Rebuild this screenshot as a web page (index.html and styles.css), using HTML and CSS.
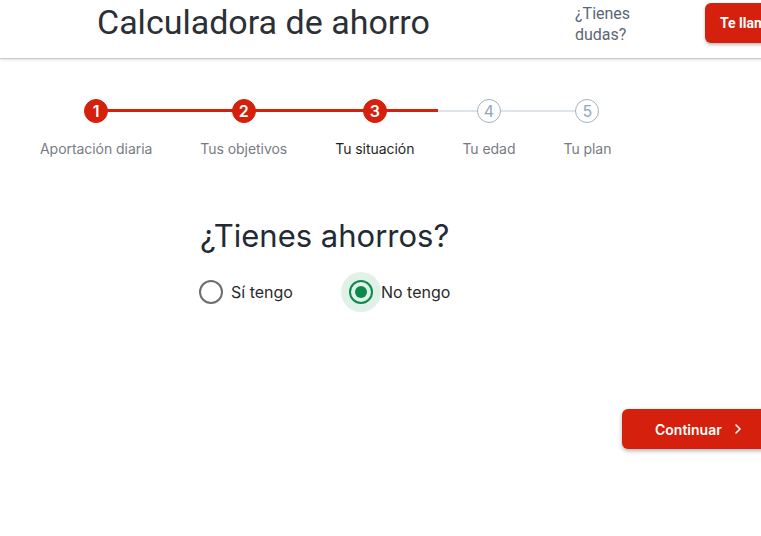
FILE: index.html
```html
<!DOCTYPE html>
<html lang="es">
<head>
<meta charset="utf-8">
<title>Calculadora de ahorro</title>
<link rel="stylesheet" href="styles.css">
</head>
<body>
<header class="header">
  <h1 class="title">Calculadora de ahorro</h1>
  <div class="doubts">¿Tienes<br>dudas?</div>
  <button class="call-btn">Te llamamos</button>
</header>

<ol class="stepper">
  <li class="step done">
    <span class="line left"></span><span class="line right"></span>
    <span class="dot">1</span>
    <span class="label">Aportación diaria</span>
  </li>
  <li class="step done">
    <span class="line left"></span><span class="line right"></span>
    <span class="dot">2</span>
    <span class="label">Tus objetivos</span>
  </li>
  <li class="step done current">
    <span class="line left"></span><span class="line right"></span>
    <span class="dot">3</span>
    <span class="label">Tu situación</span>
  </li>
  <li class="step">
    <span class="line left"></span><span class="line right"></span>
    <span class="dot">4</span>
    <span class="label">Tu edad</span>
  </li>
  <li class="step">
    <span class="line left"></span><span class="line right"></span>
    <span class="dot">5</span>
    <span class="label">Tu plan</span>
  </li>
</ol>

<section class="question">
  <h2 class="q-title">¿Tienes ahorros?</h2>
  <div class="options">
    <label class="option first">
      <span class="halo"><span class="radio"></span></span>
      <span class="opt-text">Sí tengo</span>
    </label>
    <label class="option selected">
      <span class="halo"><span class="radio"></span></span>
      <span class="opt-text">No tengo</span>
    </label>
  </div>
</section>

<div class="actions">
  <button class="next-btn">Continuar
    <svg class="chev" width="8" height="12" viewBox="0 0 8 12"><path d="M2 2l4 4-4 4" fill="none" stroke="#fff" stroke-width="1.6" stroke-linecap="round" stroke-linejoin="round"/></svg>
  </button>
</div>
</body>
</html>
```

FILE: styles.css
```css
html, body {
  margin: 0;
  padding: 0;
  overflow: hidden;
  background: #fff;
}
body {
  width: 761px;
  height: 536px;
  font-family: Inter, "Noto Sans", sans-serif;
  color: #222;
}
.header {
  width: 830px;
  height: 59px;
  box-sizing: border-box;
  display: flex;
  align-items: flex-start;
  padding: 0 0 0 97px;
  border-bottom: 1px solid #c9c9c9;
  box-shadow: 0 1px 2px rgba(0,0,0,0.12);
}
.title {
  flex: 1;
  margin: 2px 0 0;
  font-family: Roboto, "Liberation Sans", sans-serif;
  font-weight: 400;
  font-size: 34px;
  line-height: 40px;
  color: #2b2f36;
}
.doubts {
  width: 130px;
  margin-top: 3px;
  font-family: Roboto, "Liberation Sans", sans-serif;
  font-size: 16px;
  line-height: 21px;
  color: #5b6676;
}
.call-btn {
  width: 125px;
  height: 40px;
  margin-top: 3px;
  border: none;
  border-radius: 6px;
  background: #d4200c;
  color: #fff;
  font-family: Roboto, "Liberation Sans", sans-serif;
  font-weight: 700;
  font-size: 14px;
  text-align: left;
  padding: 0 0 0 15px;
  box-shadow: 0 2px 3px rgba(0,0,0,0.25);
}
.stepper {
  list-style: none;
  margin: 40px 0 0;
  padding: 0 0 0 16px;
  display: flex;
}
.step {
  position: relative;
  display: flex;
  flex-direction: column;
  align-items: center;
  padding: 0 24px;
}
.line {
  position: absolute;
  top: 11px;
  height: 2px;
  width: 50%;
  background: #dfe4e9;
}
.line.left { left: 0; }
.line.right { right: 0; }
.step:first-child .line.left,
.step:last-child .line.right { display: none; }
.step.done .line { background: #d4200c; height: 3px; top: 10px; }
.dot {
  position: relative;
  width: 24px;
  height: 24px;
  box-sizing: border-box;
  border-radius: 50%;
  border: 1px solid #9fb1c3;
  background: #fff;
  color: #93a6b9;
  font-size: 16px;
  line-height: 22px;
  text-align: center;
}
.step.done .dot {
  background: #d4200c;
  border-color: #d4200c;
  color: #fff;
  font-weight: 600;
}
.label {
  margin-top: 16px;
  font-size: 14px;
  letter-spacing: -0.05px;
  line-height: 20px;
  color: #777c84;
  white-space: nowrap;
}
.step.current .label { color: #1f1f1f; }
.question {
  margin: 57px 0 0 200px;
}
.q-title {
  margin: 0;
  font-weight: 400;
  font-size: 31px;
  line-height: 40px;
  color: #222a33;
}
.options {
  display: flex;
  gap: 48px;
  margin-top: 16px;
}
.option {
  display: flex;
  align-items: center;
  font-size: 16px;
  color: #2a2a2a;
}
.option.first { margin-left: -9px; }
.halo {
  width: 40px;
  height: 40px;
  border-radius: 50%;
  display: flex;
  align-items: center;
  justify-content: center;
}
.radio {
  width: 24px;
  height: 24px;
  box-sizing: border-box;
  border-radius: 50%;
  border: 2px solid #6e6e6e;
  display: flex;
  align-items: center;
  justify-content: center;
}
.option.selected .halo { background: #e2f1e8; }
.option.selected .radio { border-color: #0b8a4c; }
.option.selected .radio::after {
  content: "";
  width: 12px;
  height: 12px;
  border-radius: 50%;
  background: #0b8a4c;
}
.actions {
  margin-top: 97px;
  padding-left: 622px;
}
.next-btn {
  width: 160px;
  height: 40px;
  border: none;
  border-radius: 6px;
  background: #d4200c;
  color: #fff;
  font-family: Inter, "Noto Sans", sans-serif;
  font-weight: 600;
  font-size: 14px;
  text-align: left;
  padding: 0 0 0 33px;
  box-shadow: 0 2px 4px rgba(0,0,0,0.3);
  display: flex;
  align-items: center;
}
.chev { margin-left: 12px; }
```
